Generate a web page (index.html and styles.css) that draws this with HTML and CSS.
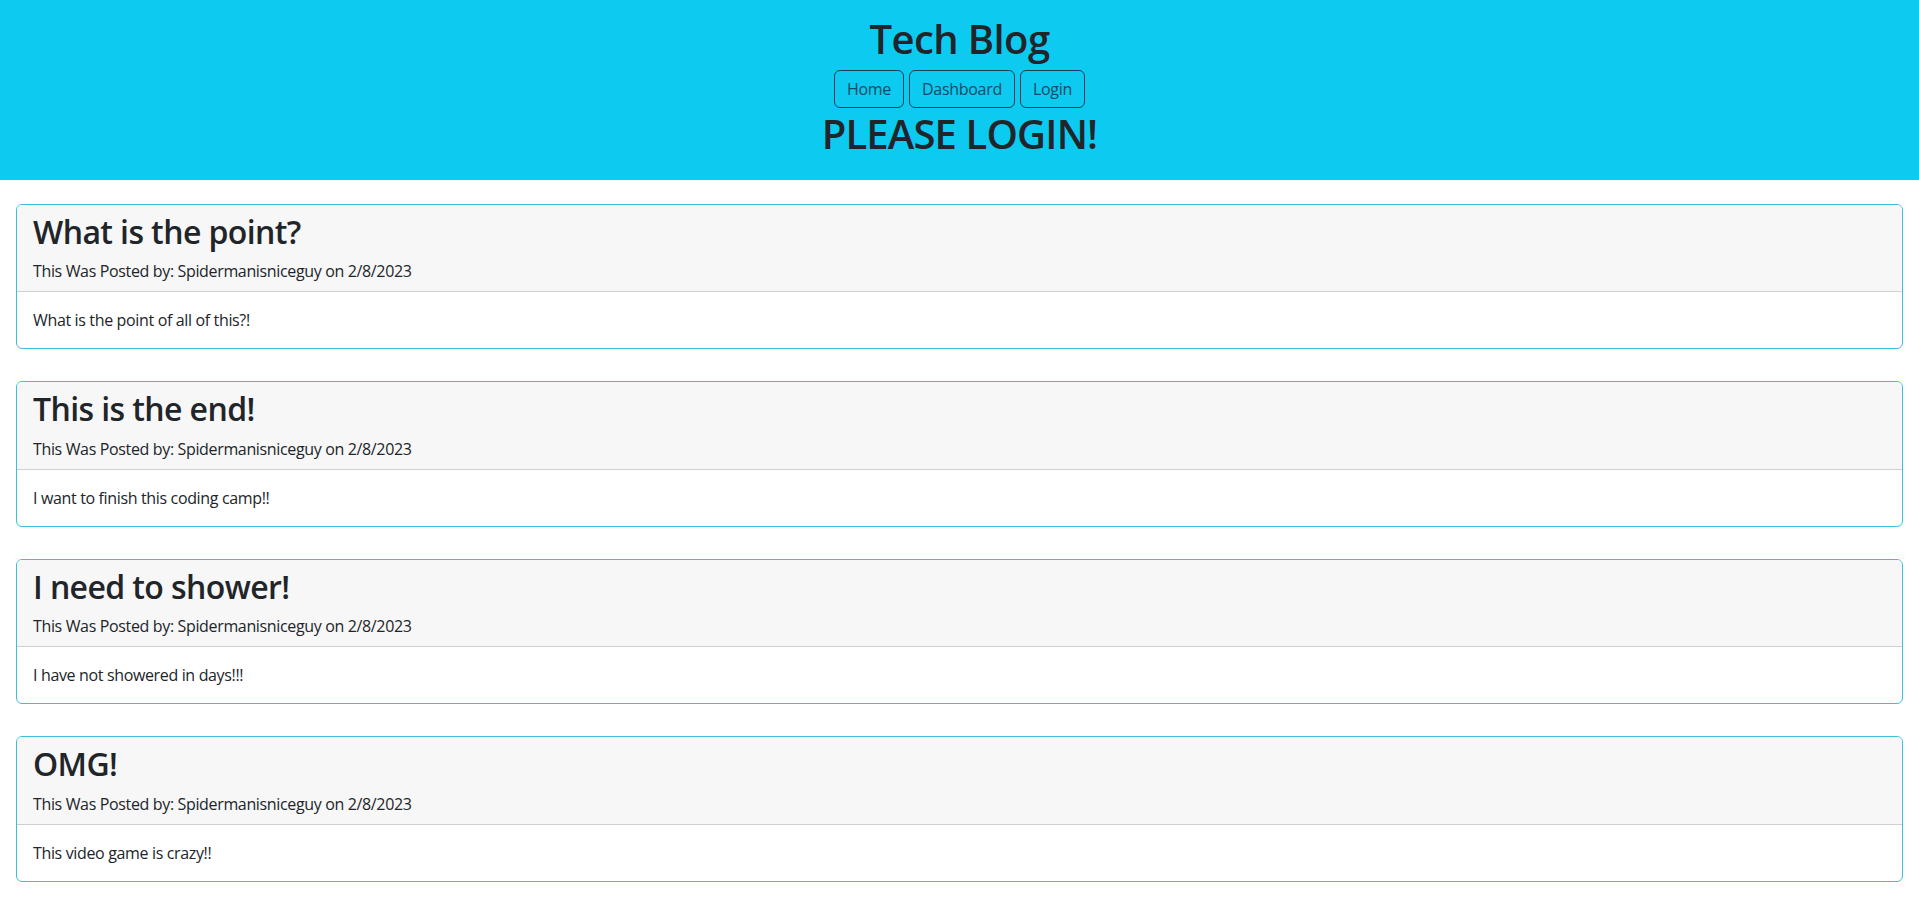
FILE: index.html
```html
<!DOCTYPE html>
<html lang="en">
<head>
<meta charset="utf-8">
<title>Tech Blog</title>
<link rel="stylesheet" href="styles.css">
</head>
<body>
<header class="site-header">
  <h1 class="site-title">Tech Blog</h1>
  <nav class="nav">
    <a class="btn" href="#">Home</a>
    <a class="btn" href="#">Dashboard</a>
    <a class="btn" href="#">Login</a>
  </nav>
  <h1 class="notice">PLEASE LOGIN!</h1>
</header>
<main class="posts">
  <article class="card">
    <div class="card-header">
      <h2 class="card-title">What is the point?</h2>
      <p class="meta">This Was Posted by: Spidermanisniceguy on 2/8/2023</p>
    </div>
    <div class="card-body">What is the point of all of this?!</div>
  </article>
  <article class="card">
    <div class="card-header">
      <h2 class="card-title">This is the end!</h2>
      <p class="meta">This Was Posted by: Spidermanisniceguy on 2/8/2023</p>
    </div>
    <div class="card-body">I want to finish this coding camp!!</div>
  </article>
  <article class="card">
    <div class="card-header">
      <h2 class="card-title">I need to shower!</h2>
      <p class="meta">This Was Posted by: Spidermanisniceguy on 2/8/2023</p>
    </div>
    <div class="card-body">I have not showered in days!!!</div>
  </article>
  <article class="card">
    <div class="card-header">
      <h2 class="card-title">OMG!</h2>
      <p class="meta">This Was Posted by: Spidermanisniceguy on 2/8/2023</p>
    </div>
    <div class="card-body">This video game is crazy!!</div>
  </article>
</main>
</body>
</html>
```
FILE: styles.css
```css
* { box-sizing: border-box; }
html, body {
  margin: 0;
  padding: 0;
  background: #fff;
  color: #212529;
  font-family: "Open Sans", "Noto Sans", "Liberation Sans", sans-serif;
  font-size: 16px;
  line-height: 1.5;
}
.site-header {
  background: #0dcaf0;
  text-align: center;
  height: 180px;
  padding-top: 15px;
}
.site-title {
  margin: 0 0 7px;
  font-size: 40px;
  font-weight: 600;
  line-height: 1.2;
  letter-spacing: -0.6px;
}
.nav {
  display: flex;
  justify-content: center;
  gap: 5px;
}
.btn {
  display: inline-block;
  padding: 6px 12px;
  border: 1px solid #143f54;
  border-radius: 6px;
  color: #0b4a66;
  text-decoration: none;
  font-size: 16px;
  line-height: 24px;
  letter-spacing: -0.3px;
}
.notice {
  margin: 0;
  padding-top: 2px;
  font-size: 40px;
  font-weight: 600;
  line-height: 1.2;
  letter-spacing: -0.85px;
}
.posts {
  padding: 24px 16px 0;
  display: flex;
  flex-direction: column;
  gap: 32px;
}
.card {
  border: 1px solid #3bbfdb;
  border-radius: 6px;
  overflow: hidden;
  background: #fff;
}
.card-header {
  background: #f7f7f7;
  padding: 8px 16px;
  border-bottom: 1px solid #d0d0d0;
}
.card-title {
  margin: 0 0 8px;
  font-size: 32px;
  font-weight: 600;
  line-height: 1.2;
  letter-spacing: -0.6px;
}
.meta {
  margin: 0;
  font-size: 16px;
  line-height: 24px;
  letter-spacing: -0.35px;
}
.card-body {
  padding: 16px;
  font-size: 16px;
  line-height: 24px;
  letter-spacing: -0.35px;
}
```
